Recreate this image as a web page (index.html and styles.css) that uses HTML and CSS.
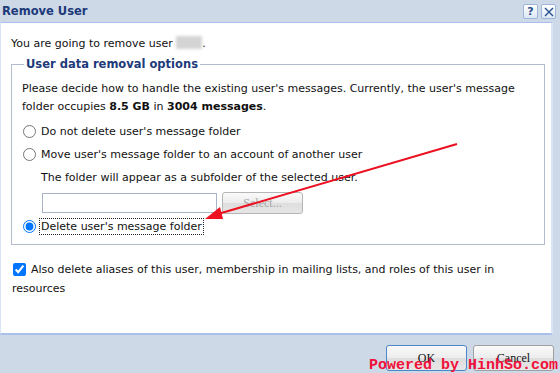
FILE: index.html
```html
<!DOCTYPE html>
<html>
<head>
<meta charset="utf-8">
<link rel="stylesheet" href="styles.css">
</head>
<body>
<div class="dialog">
  <div class="titlebar">
    <span class="title">Remove User</span>
    <span class="tools">
      <span class="tool">?</span>
      <span class="tool x"><svg width="10" height="10" viewBox="0 0 10 10"><path d="M1 1L9 9M9 1L1 9" stroke="#2a4f8c" stroke-width="1.4"/></svg></span>
    </span>
  </div>
  <div class="panel">
    <div class="intro">You are going to remove user <span class="blur"></span>.</div>
    <fieldset class="group">
      <legend>User data removal options</legend>
      <p class="desc">Please decide how to handle the existing user's messages. Currently, the user's message folder occupies <b>8.5 GB</b> in <b>3004 messages</b>.</p>
      <label class="opt"><input type="radio" name="o"><span>Do not delete user's message folder</span></label>
      <label class="opt"><input type="radio" name="o"><span>Move user's message folder to an account of another user</span></label>
      <div class="sub">The folder will appear as a subfolder of the selected user.</div>
      <div class="pick"><input type="text" class="field"><button class="btn select" disabled>Select...</button></div>
      <label class="opt"><input type="radio" name="o" checked><span class="focus">Delete user's message folder</span></label>
    </fieldset>
    <label class="chk"><input type="checkbox" checked><span>Also delete aliases of this user, membership in mailing lists, and roles of this user in resources</span></label>
  </div>
  <div class="footer">
    <button class="btn ok">OK</button>
    <button class="btn cancel">Cancel</button>
  </div>
</div>
<svg class="arrow" width="560" height="373" viewBox="0 0 560 373">
  <line x1="457" y1="144" x2="218" y2="214" stroke="#ec1020" stroke-width="2"/>
  <path d="M205 219 L220 207 L223 219 Z" fill="#ec1020"/>
</svg>
<div class="mark">Powered by HinhSo.com</div>
</body>
</html>
```
FILE: styles.css
```css
html, body { margin: 0; padding: 0; }
body {
  width: 560px; height: 373px; overflow: hidden;
  background: #cdd9e7;
  font-family: "DejaVu Sans", Verdana, sans-serif;
  font-size: 11px; color: #111;
  position: relative;
}
.dialog { display: flex; flex-direction: column; height: 373px; }
.titlebar {
  height: 22px; display: flex; align-items: center; justify-content: space-between;
  padding: 0 4px 0 2px; box-sizing: border-box;
}
.title { font-weight: bold; font-size: 11.5px; color: #1d3a7a; }
.tools { display: flex; gap: 3px; margin-top: 1px; }
.tool {
  width: 13px; height: 13px; border: 1px solid #9fb6d8; border-radius: 2px;
  background: linear-gradient(#ffffff, #dce7f5); color: #2a4f8c;
  font-weight: bold; font-size: 11px; line-height: 13px; text-align: center;
  display: flex; align-items: center; justify-content: center;
}
.panel {
  width: 553px; height: 313px; box-sizing: border-box;
  background: #fff;
  border-top: 1px solid #a9c0ec; border-left: 1px solid #d9e4f6;
  border-right: 2px solid #d9e4f6; border-bottom: 2px solid #a9c0ec;
  padding: 12px 6px 0 10px;
}
.intro { line-height: 18px; }
.blur {
  display: inline-block; width: 26px; height: 13px; vertical-align: -2px;
  background: #d4d4d4; filter: blur(1.5px);
}
.group {
  margin: 2px 0 0 0; padding: 7px 10px 6px 10px;
  border: 1px solid #b3bccc; width: 534px; box-sizing: border-box;
}
.group legend {
  font-weight: bold; color: #1d3a7a; padding: 0 2px; margin-left: 2px;
  line-height: 18px; font-size: 11.5px;
}
.desc { margin: 0 0 4px 0; line-height: 18px; }
.opt { display: flex; align-items: center; height: 22px; margin-bottom: 1px; }
.opt input { margin: 0 5px 0 1px; width: 13px; height: 13px; }
.sub { line-height: 18px; padding-left: 19px; margin-top: 4px; }
.pick { display: flex; align-items: center; gap: 5px; padding-left: 20px; height: 22px; margin: 5px 0 1px; }
.field {
  width: 175px; height: 20px; box-sizing: border-box; margin: 0;
  border: 1px solid #a9b3c6; background: #fff;
}
.btn {
  font-family: "Liberation Serif", "Times New Roman", serif; font-size: 12px;
  border-radius: 3px; box-sizing: border-box;
  background: linear-gradient(#fafafa 0%, #ececec 50%, #dedede 51%, #e6e6e6 100%);
  border: 1px solid #9a9a9a; color: #111; padding: 0;
}
.select { width: 81px; height: 22px; color: #a8a8a8; border-color: #b5b5b5; }
.focus { outline: 1px dotted #222; outline-offset: 1px; }
.chk { display: flex; align-items: flex-start; margin-top: 15px; line-height: 19px; }
.chk input { margin: 3px 5px 0 2px; width: 13px; height: 13px; flex: none; }
.chk span { margin-left: -19px; text-indent: 19px; }
.footer { display: flex; justify-content: flex-end; gap: 6px; padding: 10px 6px 0 0; }
.ok { width: 81px; height: 26px; border: 1px solid #4a86c8; }
.cancel { width: 81px; height: 26px; border-color: #a0a0a0; }
.arrow { position: absolute; left: 0; top: 0; pointer-events: none; }
.mark {
  position: absolute; right: 2px; bottom: -1px;
  font-family: "Liberation Mono", "DejaVu Sans Mono", monospace; font-weight: bold;
  font-size: 15px; color: #f0103a; letter-spacing: 0;
}
```
